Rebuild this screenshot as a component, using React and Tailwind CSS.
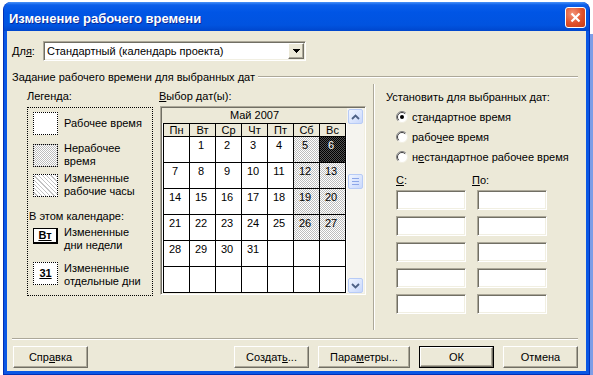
import React from 'react';

const sunken =
  'border border-t-[#aca899] border-l-[#aca899] border-b-white border-r-white shadow-[inset_1px_1px_0_#716f64,inset_-1px_-1px_0_#f1efe2]';
const raised =
  'border border-t-white border-l-white border-r-[#716f64] border-b-[#716f64] shadow-[inset_-1px_-1px_0_#aca899] bg-[#ece9d8]';
const dither = 'bg-[conic-gradient(#bdbdbd_25%,#fff_0_50%,#bdbdbd_0_75%,#fff_0)] bg-size-[2px_2px]';
const ditherDark = 'bg-[conic-gradient(#000_25%,#505050_0_50%,#000_0_75%,#505050_0)] bg-size-[2px_2px]';

const U = ({ children }) => <span className="underline underline-offset-[1px]">{children}</span>;

const Radio = ({ checked }) => (
  <svg width="12" height="12" viewBox="0 0 12 12" className="shrink-0">
    <circle cx="6" cy="6" r="5.5" fill="#fff" />
    <path d="M2.1 9.9 A5.5 5.5 0 0 1 9.9 2.1" stroke="#808080" fill="none" />
    <path d="M2.8 9.2 A4.5 4.5 0 0 1 9.2 2.8" stroke="#404040" fill="none" />
    <path d="M9.9 2.1 A5.5 5.5 0 0 1 2.1 9.9" stroke="#f1efe2" fill="none" />
    {checked && <circle cx="6" cy="6" r="2" fill="#000" />}
  </svg>
);

const Btn = ({ w, children, isDefault }) =>
  isDefault ? (
    <div className={`${w} h-[22px] border border-black`}>
      <div className={`w-full h-full ${raised} flex items-center justify-center`}>{children}</div>
    </div>
  ) : (
    <div className={`${w} h-[22px] ${raised} flex items-center justify-center`}>{children}</div>
  );

const Arrow = ({ up }) => (
  <svg width="9" height="6" viewBox="0 0 9 6">
    <path
      d={up ? 'M1 5 L4.5 1.5 L8 5' : 'M1 1 L4.5 4.5 L8 1'}
      stroke="#4d6185"
      strokeWidth="1.8"
      fill="none"
    />
  </svg>
);

const ScrollBtn = ({ children, cls = '' }) => (
  <div
    className={`h-[15px] mx-[1px] rounded-[2px] border border-[#b7cbf6] bg-[linear-gradient(135deg,#f0f5ff,#c9d8fc)] flex items-center justify-center ${cls}`}
  >
    {children}
  </div>
);

const days = ['Пн', 'Вт', 'Ср', 'Чт', 'Пт', 'Сб', 'Вс'];
const weeks = [
  [null, 1, 2, 3, 4, 5, 6],
  [7, 8, 9, 10, 11, 12, 13],
  [14, 15, 16, 17, 18, 19, 20],
  [21, 22, 23, 24, 25, 26, 27],
  [28, 29, 30, 31, null, null, null],
  [null, null, null, null, null, null, null],
];

const Calendar = () => (
  <div className={`ml-[1px] mt-[3px] w-[206px] h-[189px] p-[1px] flex ${sunken}`}>
    <div className="w-[185px] h-full pl-[1px] bg-white overflow-hidden flex flex-col">
      <div className="h-[17px] -ml-[1px] bg-[#ece9d8] flex items-center justify-center">Май 2007</div>
      <div className="flex border-t border-l border-black bg-[#ece9d8] w-[183px]">
        {days.map((d) => (
          <div key={d} className="w-[26px] h-[12px] leading-[12px] border-r border-black text-center">
            {d}
          </div>
        ))}
      </div>
      <div className="grid grid-cols-7 w-[183px] border-t border-l border-black">
        {weeks.flatMap((w, r) =>
          w.map((n, c) => {
            let bg = 'bg-white';
            if (n === 6) bg = `${ditherDark} text-white`;
            else if (n && c >= 5) bg = dither;
            return (
              <div
                key={`${r}-${c}`}
                className={`h-[26px] border-r border-b border-black text-center pr-[3px] pt-[2px] ${bg}`}
              >
                {n}
              </div>
            );
          })
        )}
      </div>
    </div>
    <div className="w-[17px] h-full bg-[#f5f4ef] flex flex-col pt-[1px]">
      <ScrollBtn>
        <Arrow up />
      </ScrollBtn>
      <ScrollBtn cls="mt-[50px] flex-col gap-[2px]">
        <div className="w-[7px] h-[1px] bg-[#8ca6e8]" />
        <div className="w-[7px] h-[1px] bg-[#8ca6e8]" />
        <div className="w-[7px] h-[1px] bg-[#8ca6e8]" />
      </ScrollBtn>
      <div className="flex-1" />
      <ScrollBtn>
        <Arrow />
      </ScrollBtn>
    </div>
  </div>
);

const Legend = () => (
  <div className="mt-[4px] h-[189px] border border-dotted border-black pl-[5px] pt-[2px] flex flex-col">
    <div className="flex items-center h-[26px] gap-[6px]">
      <div className="w-[25px] h-[23px] border border-dotted border-black bg-white" />
      <span>Рабочее время</span>
    </div>
    <div className="flex items-center h-[26px] gap-[6px] mt-[6px]">
      <div className={`w-[25px] h-[23px] border border-dotted border-black ${dither}`} />
      <span>
        Нерабочее
        <br />
        время
      </span>
    </div>
    <div className="flex items-center h-[26px] gap-[6px] mt-[4px]">
      <div className="w-[25px] h-[23px] border border-dotted border-black bg-[repeating-linear-gradient(45deg,#fff_0_2px,#c4c4c4_2px_3px)]" />
      <span>
        Измененные
        <br />
        рабочие часы
      </span>
    </div>
    <div className="mt-[11px] h-[14px] leading-[14px] -ml-[5px] pl-[1px]">В этом календаре:</div>
    <div className="flex items-start gap-[6px] mt-[3px]">
      <div className="w-[25px] h-[16px] mt-[2px] border border-black border-r-2 border-b-2 bg-white flex items-center justify-center font-bold">
        <U>Вт</U>
      </div>
      <span>
        Измененные
        <br />
        дни недели
      </span>
    </div>
    <div className="flex items-start gap-[6px] mt-[10px]">
      <div className="w-[25px] h-[23px] border border-dotted border-black bg-white flex items-center justify-center font-bold">
        <U>31</U>
      </div>
      <span>
        Измененные
        <br />
        отдельные дни
      </span>
    </div>
  </div>
);

const Input = () => <div className={`w-[70px] h-[20px] bg-white ${sunken}`} />;

export default function App() {
  return (
    <div className="w-[593px] h-[375px] bg-white overflow-hidden flex pt-[2px] pl-[3px] font-['Liberation_Sans',Arial,sans-serif] text-[11px] leading-[13px] text-black">
      <div className="w-[587px] h-[373px] shrink-0 flex flex-col rounded-t-[8px] bg-[#0a57e4] border border-t-0 border-[#0030b8] overflow-hidden">
        {/* title bar */}
        <div className="h-[29px] shrink-0 flex items-center pl-[5px] pr-[3px] bg-[linear-gradient(to_bottom,#4a93f8_0%,#0c5fea_10%,#0055e5_35%,#0153df_80%,#0046cc_100%)]">
          <span className="flex-1 pt-[4px] text-white font-bold text-[13px] [text-shadow:1px_1px_0_#0a2a9a]">
            Изменение рабочего времени
          </span>
          <div className="w-[21px] h-[21px] mt-[2px] rounded-[3px] border border-white bg-[radial-gradient(circle_at_35%_30%,#f39478,#e0502a_55%,#c43c16)] flex items-center justify-center">
            <svg width="11" height="11" viewBox="0 0 11 11">
              <path d="M1.5 1.5 L9.5 9.5 M9.5 1.5 L1.5 9.5" stroke="#fff" strokeWidth="2.2" />
            </svg>
          </div>
        </div>

        {/* client area */}
        <div className="w-[579px] h-[340px] mx-[3px] bg-[#ece9d8] flex flex-col pl-[5px] pr-[8px] pt-[10px]">
          <div className="flex items-center h-[20px]">
            <span className="w-[31px]">
              Дл<U>я</U>:
            </span>
            <div className={`w-[263px] h-[20px] bg-white p-[1px] flex items-center ${sunken}`}>
              <span className="flex-1 pl-[2px]">Стандартный (календарь проекта)</span>
              <div className={`w-[16px] h-full ${raised} flex items-center justify-center`}>
                <svg width="7" height="4" viewBox="0 0 7 4" shapeRendering="crispEdges">
                  <path d="M0 0h7v1h-1v1h-1v1h-1v1h-1v-1h-1v-1h-1v-1h-1z" fill="#000" />
                </svg>
              </div>
            </div>
          </div>

          <div className="flex items-center mt-[9px] h-[14px]">
            <span>Задание рабочего времени для выбранных дат</span>
            <div className="flex-1 ml-[3px] border-t border-t-[#aca899] border-b border-b-white" />
          </div>

          <div className="flex h-[246px]">
            <div className="ml-[15px] w-[126px] pt-[5px] flex flex-col">
              <div className="h-[14px] leading-[14px]">Легенда:</div>
              <Legend />
            </div>

            <div className="ml-[6px] w-[207px] pt-[5px] flex flex-col">
              <div className="h-[14px] leading-[14px]">
                <U>В</U>ыбор дат(ы):
              </div>
              <Calendar />
            </div>

            <div className="ml-[7px] w-[2px] h-full border-l border-l-[#aca899] border-r border-r-white" />

            <div className="ml-[11px] pt-[6px] flex flex-col">
              <div className="h-[14px] leading-[14px]">Установить для выбранных дат:</div>
              <div className="mt-[3px] flex flex-col pl-[10px]">
                <div className="h-[20px] flex items-center gap-[4px]">
                  <Radio checked />
                  <span>
                    с<U>т</U>андартное время
                  </span>
                </div>
                <div className="h-[20px] flex items-center gap-[4px]">
                  <Radio />
                  <span>
                    рабо<U>ч</U>ее время
                  </span>
                </div>
                <div className="h-[20px] flex items-center gap-[4px]">
                  <Radio />
                  <span>
                    н<U>е</U>стандартное рабочее время
                  </span>
                </div>
              </div>
              <div className="mt-[6px] pl-[10px] grid grid-cols-[70px_70px] gap-x-[11px]">
                <div className="h-[14px] leading-[14px]">
                  <U>С</U>:
                </div>
                <div className="h-[14px] leading-[14px] -ml-[5px]">
                  <U>П</U>о:
                </div>
              </div>
              <div className="mt-[3px] pl-[10px] grid grid-cols-[70px_70px] gap-x-[11px] gap-y-[6px]">
                {Array.from({ length: 10 }).map((_, i) => (
                  <Input key={i} />
                ))}
              </div>
            </div>
          </div>

          <div className="mt-[8px] border-t border-t-[#aca899] border-b border-b-white" />

          <div className="mt-[6px] flex items-center">
            <div className="ml-[1px]">
              <Btn w="w-[75px]">
                Спр<U>а</U>вка
              </Btn>
            </div>
            <div className="flex-1" />
            <div className="flex gap-[9px]">
              <Btn w="w-[75px]">
                Создат<U>ь</U>...
              </Btn>
              <Btn w="w-[92px]">
                Пара<U>м</U>етры...
              </Btn>
              <Btn w="w-[75px]" isDefault>
                ОК
              </Btn>
              <Btn w="w-[75px]">Отмена</Btn>
            </div>
          </div>
        </div>
      </div>
      <div className="w-[3px] mt-[32px] h-[341px] bg-[#7d9de6]" />
    </div>
  );
}
